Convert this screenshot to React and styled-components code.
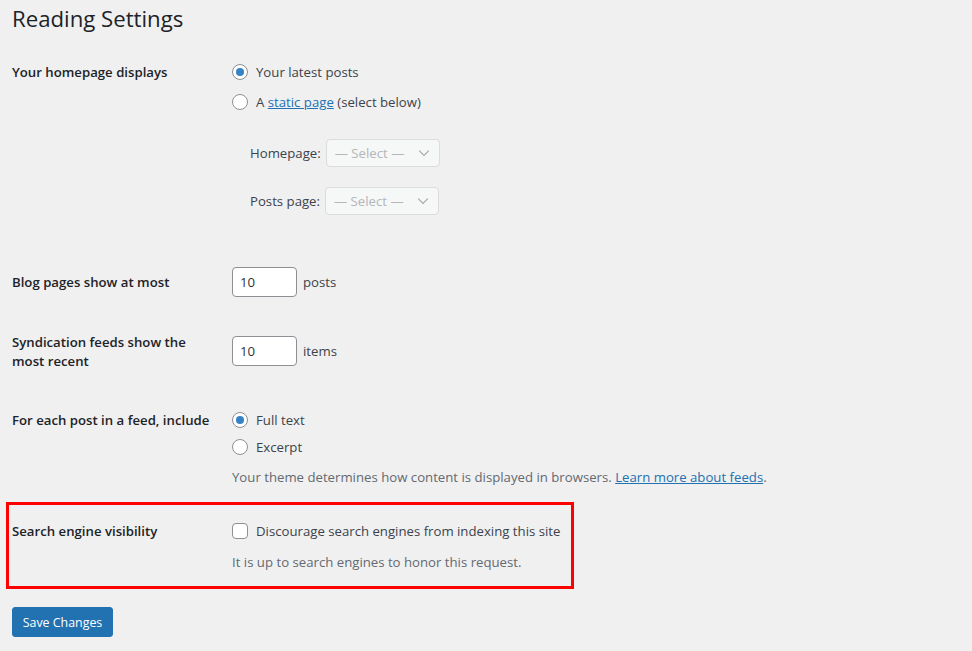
import React from "react";
import styled, { createGlobalStyle } from "styled-components";

const Global = createGlobalStyle`
  html, body { margin: 0; padding: 0; background: #f0f0f1; }
  body { font-family: "Open Sans", "Noto Sans", sans-serif; color: #1d2327; font-size: 13.2px; }
  #root { min-height: 651px; }
`;

const Page = styled.div`
  padding: 0 12px;
  width: 948px;
`;

const Title = styled.h1`
  margin: 0;
  padding-top: 4px;
  font-size: 22.2px;
  line-height: 29px;
  font-weight: 400;
  color: #1d2327;
`;

const Row = styled.div`
  display: grid;
  grid-template-columns: 220px 1fr;
  align-items: start;
  margin-top: ${(p) => p.$mt}px;
`;

const Label = styled.div`
  font-weight: 600;
  font-size: 13.2px;
  line-height: ${(p) => p.$lh || 20}px;
  padding-top: ${(p) => p.$pt || 0}px;
  width: ${(p) => p.$w || 210}px;
`;

const Field = styled.div`
  display: flex;
  flex-direction: column;
  gap: ${(p) => p.$gap || 0}px;
  padding-top: ${(p) => p.$pt || 0}px;
`;

const Option = styled.label`
  display: flex;
  align-items: center;
  gap: 8px;
  height: 20px;
  line-height: 20px;
  font-size: 13.2px;
  color: #3c434a;
  white-space: nowrap;
`;

const Radio = styled.span`
  width: 16px;
  height: 16px;
  box-sizing: border-box;
  border: 1px solid #8c8f94;
  border-radius: 50%;
  background: #fff;
  display: flex;
  align-items: center;
  justify-content: center;
  flex: none;
  &::after {
    content: "";
    width: 8px;
    height: 8px;
    border-radius: 50%;
    background: ${(p) => (p.$checked ? "#3582c4" : "transparent")};
  }
`;

const Checkbox = styled.span`
  width: 16px;
  height: 16px;
  box-sizing: border-box;
  border: 1px solid #8c8f94;
  border-radius: 4px;
  background: #fff;
  flex: none;
`;

const Link = styled.a`
  color: #2271b1;
  text-decoration: underline;
`;

const SubList = styled.div`
  display: flex;
  flex-direction: column;
  gap: 20px;
  margin-top: 27px;
  padding-left: 18px;
`;

const SubRow = styled.div`
  display: flex;
  align-items: center;
  gap: 5px;
  font-size: 13.2px;
  color: #3c434a;
`;

const Select = styled.div`
  width: 114px;
  height: 28px;
  box-sizing: border-box;
  border: 1px solid #dcdcde;
  border-radius: 4px;
  background: #f6f7f7;
  color: #b4b6b9;
  font-size: 13.2px;
  display: flex;
  align-items: center;
  justify-content: space-between;
  padding: 0 7px 0 8px;
`;

const InputLine = styled.div`
  display: flex;
  align-items: center;
  gap: 6px;
  font-size: 13.2px;
  color: #3c434a;
  margin-top: ${(p) => p.$mt || 0}px;
`;

const NumberBox = styled.div`
  width: 65px;
  height: 30px;
  box-sizing: border-box;
  border: 1px solid #8c8f94;
  border-radius: 4px;
  background: #fff;
  color: #2c3338;
  display: flex;
  align-items: center;
  padding: 0 7px;
  font-size: 13.2px;
`;

const Description = styled.p`
  margin: ${(p) => p.$mt || 0}px 0 0;
  font-size: 13.2px;
  line-height: 20px;
  color: #646970;
  white-space: nowrap;
`;

const Highlight = styled.div`
  margin: 15px 0 0 -6px;
  width: 568px;
  box-sizing: border-box;
  border: 3px solid #ff0000;
  padding: 16px 0 14px 3px;
`;

const Button = styled.button`
  margin-top: 18px;
  width: 101px;
  height: 30px;
  border: 1px solid #2271b1;
  border-radius: 3px;
  background: #2271b1;
  color: #fff;
  font-family: inherit;
  font-size: 12.4px;
  padding: 0;
  cursor: pointer;
`;

const Chevron = () => (
  <svg width="16" height="16" viewBox="0 0 20 20" fill="none">
    <path d="M4 7l6 6 6-6" stroke="#a7aaad" strokeWidth="1.6" fill="none" />
  </svg>
);

export default function App() {
  return (
    <>
      <Global />
      <Page>
        <Title>Reading Settings</Title>

        <Row $mt={29}>
          <Label>Your homepage displays</Label>
          <Field>
            <Field $gap={10}>
              <Option>
                <Radio $checked />
                Your latest posts
              </Option>
              <Option>
                <Radio />
                <span>
                  A <Link href="#">static page</Link> (select below)
                </span>
              </Option>
            </Field>
            <SubList>
              <SubRow>
                Homepage:
                <Select>
                  — Select — <Chevron />
                </Select>
              </SubRow>
              <SubRow>
                Posts page:
                <Select>
                  — Select — <Chevron />
                </Select>
              </SubRow>
            </SubList>
          </Field>
        </Row>

        <Row $mt={52}>
          <Label $pt={5}>Blog pages show at most</Label>
          <InputLine>
            <NumberBox>10</NumberBox>
            posts
          </InputLine>
        </Row>

        <Row $mt={36}>
          <Label $lh={19} $w={185}>Syndication feeds show the most recent</Label>
          <InputLine $mt={3}>
            <NumberBox>10</NumberBox>
            items
          </InputLine>
        </Row>

        <Row $mt={39}>
          <Label>For each post in a feed, include</Label>
          <Field>
            <Field $gap={7}>
              <Option>
                <Radio $checked />
                Full text
              </Option>
              <Option>
                <Radio />
                Excerpt
              </Option>
            </Field>
            <Description $mt={10}>
              Your theme determines how content is displayed in browsers.{" "}
              <Link href="#">Learn more about feeds</Link>.
            </Description>
          </Field>
        </Row>

        <Highlight>
          <Row $mt={0}>
            <Label>Search engine visibility</Label>
            <Field>
              <Option>
                <Checkbox />
                Discourage search engines from indexing this site
              </Option>
              <Description $mt={11}>It is up to search engines to honor this request.</Description>
            </Field>
          </Row>
        </Highlight>

        <Button>Save Changes</Button>
      </Page>
    </>
  );
}
